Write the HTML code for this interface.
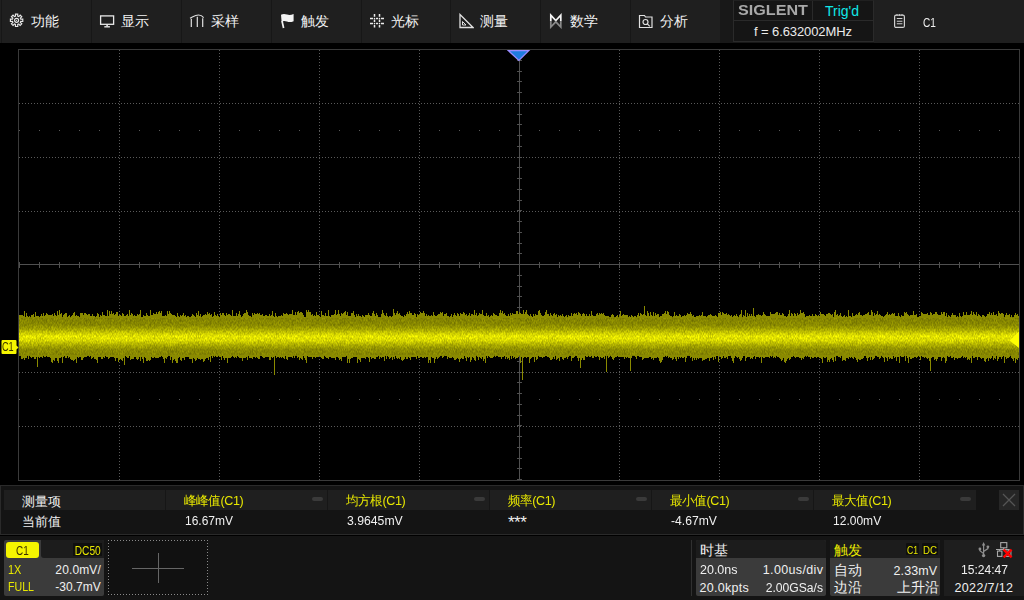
<!DOCTYPE html>
<html><head><meta charset="utf-8"><style>
html,body{margin:0;padding:0;background:#000;width:1024px;height:600px;overflow:hidden}
body{position:relative;font-family:"Liberation Sans", sans-serif}
.t{position:absolute;white-space:nowrap;line-height:1.2}
.r{text-align:right}
</style></head><body>
<div style="position:absolute;left:0;top:0;width:1024px;height:43px;background:#1f1f1f"></div><div style="position:absolute;left:1px;top:0;width:1px;height:43px;background:#171717"></div><div style="position:absolute;left:91px;top:0;width:1px;height:43px;background:#171717"></div><div style="position:absolute;left:181px;top:0;width:1px;height:43px;background:#171717"></div><div style="position:absolute;left:271px;top:0;width:1px;height:43px;background:#171717"></div><div style="position:absolute;left:361px;top:0;width:1px;height:43px;background:#171717"></div><div style="position:absolute;left:450px;top:0;width:1px;height:43px;background:#171717"></div><div style="position:absolute;left:540px;top:0;width:1px;height:43px;background:#171717"></div><div style="position:absolute;left:630px;top:0;width:1px;height:43px;background:#171717"></div><div style="position:absolute;left:8px;top:12px;width:18px;height:18px"><svg width="18" height="18" viewBox="0 0 18 18" fill="none" stroke="#e8e8e8" stroke-width="1.15" stroke-linejoin="miter"><path d="M7.49 4.15 L7.45 2.11 L9.75 2.11 L9.71 4.15 L10.75 4.58 L12.17 3.11 L13.79 4.73 L12.32 6.15 L12.75 7.19 L14.79 7.15 L14.79 9.45 L12.75 9.41 L12.32 10.45 L13.79 11.87 L12.17 13.49 L10.75 12.02 L9.71 12.45 L9.75 14.49 L7.45 14.49 L7.49 12.45 L6.45 12.02 L5.03 13.49 L3.41 11.87 L4.88 10.45 L4.45 9.41 L2.41 9.45 L2.41 7.15 L4.45 7.19 L4.88 6.15 L3.41 4.73 L5.03 3.11 L6.45 4.58Z"/><circle cx="8.6" cy="8.3" r="2.0"/><circle cx="8.6" cy="8.3" r="0.6" fill="#e8e8e8" stroke="none"/></svg></div><div class="t" style="left:30.5px;top:14px;font-size:13.5px;font-weight:500;color:#f2f2f2">功能</div><div style="position:absolute;left:99px;top:13px;width:16px;height:16px"><svg width="16" height="16" viewBox="0 0 16 16" fill="none" stroke="#e8e8e8" stroke-width="1.3"><rect x="1.6" y="2.9" width="13" height="8.4"/><path d="M8.1 11.3v2" stroke-width="1.6"/><path d="M5.3 13.8h5.6" stroke-width="1.4"/></svg></div><div class="t" style="left:120.5px;top:14px;font-size:13.5px;font-weight:500;color:#f2f2f2">显示</div><div style="position:absolute;left:189px;top:13px;width:16px;height:16px"><svg width="16" height="16" viewBox="0 0 16 16" fill="none" stroke="#e0e0e0" stroke-width="1.2"><path d="M1 5.2C3.5 4.2 6 2 9.5 2 12 2 13.5 3.2 14.6 4.6"/><path d="M2.3 5.8V14M8.3 3.8V14M13.7 5.2V14"/></svg></div><div class="t" style="left:210.5px;top:14px;font-size:13.5px;font-weight:500;color:#f2f2f2">采样</div><div style="position:absolute;left:280px;top:13px;width:16px;height:16px"><svg width="16" height="16" viewBox="0 0 16 16"><path d="M2 8L3.6 15" stroke="#f4f4f4" stroke-width="1.7"/><path d="M1 1.8C3 0.6 5 0.8 7 1.6 9 2.4 11 2.2 13.6 1.1L13.6 8.2C11 9.3 9 9.4 7 8.6 5 7.8 3 7.8 1.6 8.8Z" fill="#f4f4f4"/></svg></div><div class="t" style="left:300.5px;top:14px;font-size:13.5px;font-weight:500;color:#f2f2f2">触发</div><div style="position:absolute;left:369px;top:13px;width:16px;height:16px"><svg width="16" height="16" viewBox="0 0 16 16" stroke="#ececec" stroke-width="1.5" fill="none"><path d="M5.5 1v2.8M5.5 6.5v2.6M5.5 12v2.6M10.5 1v2.8M10.5 6.5v2.6M10.5 12v2.6M1 5.5h3M7 5.5h2M12 5.5h3M1 10.6h3M7 10.6h2M12 10.6h3"/><path d="M5.5 5.5h.01M10.5 5.5h.01M5.5 10.6h.01M10.5 10.6h.01" stroke-linecap="round" stroke-width="1.6"/></svg></div><div class="t" style="left:390.5px;top:14px;font-size:13.5px;font-weight:500;color:#f2f2f2">光标</div><div style="position:absolute;left:458px;top:13px;width:16px;height:16px"><svg width="16" height="16" viewBox="0 0 16 16" fill="none" stroke="#e0e0e0" stroke-width="1.3"><path d="M2 1.5v13h13z"/><path d="M4.5 8.5v3.5h3.5z" stroke-width="1"/></svg></div><div class="t" style="left:479.5px;top:14px;font-size:13.5px;font-weight:500;color:#f2f2f2">测量</div><div style="position:absolute;left:549px;top:13px;width:16px;height:16px"><svg width="16" height="16" viewBox="0 0 16 16" fill="none" stroke-width="1.7"><path d="M1.8 8.2V2.2L6.8 7.6 11.8 2.2V8.2" stroke="#f4f4f4"/><path d="M1.8 8.2V14 L6.8 8.8 11.8 14V8.2" stroke="#8a8a8a"/></svg></div><div class="t" style="left:569.5px;top:14px;font-size:13.5px;font-weight:500;color:#f2f2f2">数学</div><div style="position:absolute;left:638px;top:13px;width:16px;height:16px"><svg width="16" height="16" viewBox="0 0 16 16" fill="none" stroke="#e0e0e0" stroke-width="1.2"><path d="M1.5 2.5h5l1 1.5h6.5v10.5h-12.5z"/><circle cx="7.5" cy="9" r="2.5"/><path d="M9.3 10.8l2.5 2.5"/></svg></div><div class="t" style="left:659.5px;top:14px;font-size:13.5px;font-weight:500;color:#f2f2f2">分析</div><div style="position:absolute;left:720px;top:0;width:154px;height:43px;background:#181818"></div><div style="position:absolute;left:733px;top:0;width:139px;height:40px;background:#151515;border:1px solid #2a2a2a;border-top-color:#202020"></div><div style="position:absolute;left:734px;top:20px;width:139px;height:1px;background:#2a2a2a"></div><div style="position:absolute;left:812px;top:1px;width:1px;height:19px;background:#2a2a2a"></div><div class="t" style="left:738px;top:1.4px;font-size:15px;font-weight:bold;color:#a8a8a8;transform:scaleX(1.075);transform-origin:0 0">SIGLENT</div><div class="t" style="left:825px;top:3px;font-size:14px;color:#10e8e8">Trig'd</div><div class="t" style="left:754px;top:24px;font-size:13px;letter-spacing:-0.1px;color:#ececec">f = 6.632002MHz</div><div style="position:absolute;left:893px;top:13px;width:13px;height:16px"><svg width="13" height="16" viewBox="0 0 13 16" fill="none" stroke="#d0d0d0" stroke-width="1.2"><rect x="1.6" y="2.2" width="9.8" height="12.2" rx="1.5"/><path d="M4 1.2v1.5M6.5 1.2v1.5M9 1.2v1.5" stroke-width="1"/><path d="M3.8 5.5h5.6M3.8 8.2h5.6M3.8 10.8h5.6" stroke-width="1.1"/></svg></div><div class="t" style="left:923.40px;top:15.37px;font-size:13px;letter-spacing:0.00px;color:#f0f0f0;transform:scaleX(0.777);transform-origin:0 0;">C1</div>
<svg style="position:absolute;left:0;top:0" width="1024" height="600"><line x1="119.5" y1="50" x2="119.5" y2="480" stroke="#5a5a5a" stroke-width="1" stroke-dasharray="1 2"/><line x1="219.5" y1="50" x2="219.5" y2="480" stroke="#5a5a5a" stroke-width="1" stroke-dasharray="1 2"/><line x1="319.5" y1="50" x2="319.5" y2="480" stroke="#5a5a5a" stroke-width="1" stroke-dasharray="1 2"/><line x1="419.5" y1="50" x2="419.5" y2="480" stroke="#5a5a5a" stroke-width="1" stroke-dasharray="1 2"/><line x1="619.5" y1="50" x2="619.5" y2="480" stroke="#5a5a5a" stroke-width="1" stroke-dasharray="1 2"/><line x1="719.5" y1="50" x2="719.5" y2="480" stroke="#5a5a5a" stroke-width="1" stroke-dasharray="1 2"/><line x1="819.5" y1="50" x2="819.5" y2="480" stroke="#5a5a5a" stroke-width="1" stroke-dasharray="1 2"/><line x1="919.5" y1="50" x2="919.5" y2="480" stroke="#5a5a5a" stroke-width="1" stroke-dasharray="1 2"/><line x1="19" y1="103.5" x2="1019" y2="103.5" stroke="#5a5a5a" stroke-width="1" stroke-dasharray="1 2"/><line x1="19" y1="157.5" x2="1019" y2="157.5" stroke="#5a5a5a" stroke-width="1" stroke-dasharray="1 2"/><line x1="19" y1="211.5" x2="1019" y2="211.5" stroke="#5a5a5a" stroke-width="1" stroke-dasharray="1 2"/><line x1="19" y1="318.5" x2="1019" y2="318.5" stroke="#5a5a5a" stroke-width="1" stroke-dasharray="1 2"/><line x1="19" y1="372.5" x2="1019" y2="372.5" stroke="#5a5a5a" stroke-width="1" stroke-dasharray="1 2"/><line x1="19" y1="426.5" x2="1019" y2="426.5" stroke="#5a5a5a" stroke-width="1" stroke-dasharray="1 2"/><line x1="19" y1="130.5" x2="1019" y2="130.5" stroke="#5a5a5a" stroke-width="1" stroke-dasharray="1 19"/><line x1="19" y1="399.5" x2="1019" y2="399.5" stroke="#5a5a5a" stroke-width="1" stroke-dasharray="1 19"/><line x1="519.5" y1="50" x2="519.5" y2="480" stroke="#505050"/><line x1="19" y1="264.5" x2="1019" y2="264.5" stroke="#505050"/><path d="M19.5 262V268 M39.5 262V268 M59.5 262V268 M79.5 262V268 M99.5 262V268 M119.5 262V268 M139.5 262V268 M159.5 262V268 M179.5 262V268 M199.5 262V268 M219.5 262V268 M239.5 262V268 M259.5 262V268 M279.5 262V268 M299.5 262V268 M319.5 262V268 M339.5 262V268 M359.5 262V268 M379.5 262V268 M399.5 262V268 M419.5 262V268 M439.5 262V268 M459.5 262V268 M479.5 262V268 M499.5 262V268 M519.5 262V268 M539.5 262V268 M559.5 262V268 M579.5 262V268 M599.5 262V268 M619.5 262V268 M639.5 262V268 M659.5 262V268 M679.5 262V268 M699.5 262V268 M719.5 262V268 M739.5 262V268 M759.5 262V268 M779.5 262V268 M799.5 262V268 M819.5 262V268 M839.5 262V268 M859.5 262V268 M879.5 262V268 M899.5 262V268 M919.5 262V268 M939.5 262V268 M959.5 262V268 M979.5 262V268 M999.5 262V268 M1019.5 262V268 M517 49.5H522 M517 60.5H522 M517 71.5H522 M517 81.5H522 M517 92.5H522 M517 103.5H522 M517 114.5H522 M517 124.5H522 M517 135.5H522 M517 146.5H522 M517 157.5H522 M517 167.5H522 M517 178.5H522 M517 189.5H522 M517 200.5H522 M517 210.5H522 M517 221.5H522 M517 232.5H522 M517 243.5H522 M517 253.5H522 M517 264.5H522 M517 275.5H522 M517 286.5H522 M517 296.5H522 M517 307.5H522 M517 318.5H522 M517 329.5H522 M517 339.5H522 M517 350.5H522 M517 361.5H522 M517 372.5H522 M517 382.5H522 M517 393.5H522 M517 404.5H522 M517 415.5H522 M517 425.5H522 M517 436.5H522 M517 447.5H522 M517 458.5H522 M517 468.5H522 M517 479.5H522" stroke="#505050" fill="none"/><rect x="18.5" y="49.5" width="1001" height="431" fill="none" stroke="#3a3a3a"/><defs><linearGradient id="wg" x1="0" y1="0" x2="0" y2="1"><stop offset="0" stop-color="#808000"/><stop offset="0.2" stop-color="#868600"/><stop offset="0.31" stop-color="#a0a000"/><stop offset="0.43" stop-color="#cccc00"/><stop offset="0.5" stop-color="#e0e000"/><stop offset="0.6" stop-color="#d4d400"/><stop offset="0.72" stop-color="#a8a800"/><stop offset="0.84" stop-color="#888800"/><stop offset="1" stop-color="#808000"/></linearGradient><filter id="nz" x="0" y="0" width="100%" height="100%" color-interpolation-filters="sRGB"><feTurbulence type="fractalNoise" baseFrequency="1.5 0.45" numOctaves="1" seed="5" result="t"/><feColorMatrix in="t" type="matrix" values="1 0 0 0 0  1 0 0 0 0  1 0 0 0 0  0 0 0 0 1" result="g"/><feComposite in="SourceGraphic" in2="g" operator="arithmetic" k1="0.6" k2="0.72" k3="0" k4="0"/></filter></defs><rect x="19" y="317" width="1000" height="39" fill="url(#wg)" filter="url(#nz)"/><path d="M19.5 318V315 M20.5 318V315 M21.5 318V315 M21.5 355V359 M22.5 318V315 M22.5 355V359 M23.5 318V316 M23.5 355V358 M24.5 318V311 M24.5 355V360 M25.5 355V358 M26.5 318V313 M26.5 355V358 M27.5 318V316 M28.5 355V359 M29.5 318V316 M30.5 355V357 M31.5 318V315 M31.5 355V358 M32.5 318V315 M32.5 355V357 M33.5 318V314 M33.5 355V357 M34.5 355V359 M35.5 318V312 M35.5 355V359 M36.5 318V316 M36.5 355V357 M37.5 318V316 M37.5 355V358 M38.5 318V316 M38.5 355V357 M39.5 355V358 M40.5 318V316 M40.5 355V357 M41.5 318V314 M41.5 355V357 M42.5 318V316 M42.5 355V358 M43.5 318V313 M44.5 318V316 M44.5 355V357 M45.5 318V315 M45.5 355V357 M46.5 318V313 M47.5 318V314 M47.5 355V357 M48.5 318V315 M48.5 355V357 M49.5 318V315 M49.5 355V357 M50.5 318V315 M50.5 355V358 M51.5 318V315 M51.5 355V362 M52.5 318V314 M52.5 355V363 M53.5 318V316 M53.5 355V360 M54.5 318V313 M54.5 355V361 M55.5 318V315 M55.5 355V358 M56.5 318V316 M56.5 355V358 M57.5 318V311 M57.5 355V361 M58.5 318V315 M58.5 355V363 M59.5 318V310 M59.5 355V358 M60.5 318V314 M60.5 355V358 M61.5 318V313 M61.5 355V357 M62.5 355V363 M63.5 318V315 M63.5 355V357 M64.5 318V314 M65.5 318V313 M65.5 355V358 M66.5 318V313 M66.5 355V358 M68.5 318V316 M68.5 355V358 M69.5 318V315 M69.5 355V357 M70.5 355V359 M71.5 318V316 M71.5 355V360 M72.5 318V315 M72.5 355V360 M73.5 318V313 M73.5 355V361 M74.5 318V312 M74.5 355V360 M75.5 318V316 M75.5 355V359 M76.5 318V315 M76.5 355V363 M77.5 318V316 M77.5 355V357 M78.5 318V316 M78.5 355V358 M79.5 355V357 M80.5 318V313 M80.5 355V357 M81.5 318V313 M81.5 355V360 M82.5 318V313 M82.5 355V360 M83.5 318V315 M83.5 355V358 M84.5 318V313 M84.5 355V357 M85.5 318V313 M85.5 355V357 M86.5 318V314 M86.5 355V357 M87.5 318V315 M88.5 318V314 M89.5 318V314 M89.5 355V357 M90.5 318V316 M91.5 318V316 M91.5 355V359 M92.5 318V314 M92.5 355V358 M93.5 318V316 M93.5 355V357 M94.5 318V316 M94.5 355V359 M95.5 355V359 M96.5 318V316 M96.5 355V360 M97.5 318V313 M97.5 355V363 M98.5 318V314 M98.5 355V357 M99.5 355V357 M100.5 318V315 M100.5 355V357 M101.5 318V316 M101.5 355V359 M102.5 318V312 M102.5 355V359 M103.5 318V315 M103.5 355V357 M104.5 318V315 M104.5 355V358 M105.5 318V316 M106.5 318V316 M106.5 355V357 M107.5 318V310 M107.5 355V357 M108.5 318V316 M108.5 355V359 M109.5 318V311 M109.5 355V358 M110.5 318V314 M110.5 355V357 M111.5 318V311 M111.5 355V357 M112.5 318V314 M112.5 355V357 M113.5 318V313 M113.5 355V357 M114.5 318V315 M114.5 355V358 M115.5 318V314 M115.5 355V361 M116.5 318V312 M116.5 355V358 M117.5 318V312 M117.5 355V358 M118.5 318V316 M118.5 355V362 M119.5 318V315 M119.5 355V360 M120.5 318V315 M120.5 355V359 M121.5 318V316 M121.5 355V360 M122.5 318V313 M122.5 355V361 M123.5 318V314 M123.5 355V358 M124.5 318V316 M124.5 355V362 M125.5 318V316 M126.5 318V315 M126.5 355V357 M127.5 318V314 M127.5 355V358 M128.5 318V316 M128.5 355V358 M129.5 318V310 M130.5 318V315 M130.5 355V360 M131.5 318V313 M131.5 355V359 M132.5 318V314 M132.5 355V359 M133.5 318V316 M133.5 355V359 M134.5 318V315 M134.5 355V357 M135.5 318V316 M135.5 355V357 M136.5 318V316 M136.5 355V359 M137.5 318V314 M137.5 355V360 M138.5 318V315 M138.5 355V359 M139.5 318V314 M139.5 355V357 M140.5 318V310 M140.5 355V361 M141.5 355V357 M142.5 355V359 M143.5 318V315 M143.5 355V363 M144.5 318V316 M144.5 355V357 M145.5 318V316 M145.5 355V358 M146.5 318V313 M146.5 355V361 M147.5 318V315 M147.5 355V361 M148.5 318V316 M148.5 355V360 M149.5 318V316 M149.5 355V361 M150.5 318V310 M150.5 355V360 M151.5 318V315 M151.5 355V357 M152.5 318V315 M152.5 355V358 M153.5 318V313 M153.5 355V358 M154.5 318V314 M154.5 355V357 M155.5 318V314 M155.5 355V358 M156.5 318V312 M156.5 355V358 M157.5 318V314 M157.5 355V358 M158.5 318V312 M158.5 355V358 M159.5 318V311 M159.5 355V357 M160.5 318V313 M160.5 355V357 M161.5 318V311 M162.5 318V316 M162.5 355V357 M163.5 318V316 M163.5 355V359 M164.5 318V316 M164.5 355V363 M165.5 318V315 M165.5 355V358 M166.5 318V316 M166.5 355V359 M167.5 318V311 M167.5 355V357 M168.5 318V314 M169.5 318V311 M170.5 318V313 M170.5 355V360 M171.5 318V314 M171.5 355V357 M172.5 318V315 M172.5 355V363 M173.5 318V315 M173.5 355V360 M174.5 318V315 M174.5 355V359 M175.5 318V316 M175.5 355V361 M176.5 355V363 M177.5 318V313 M177.5 355V363 M178.5 318V316 M178.5 355V358 M179.5 355V357 M180.5 318V315 M180.5 355V360 M181.5 318V316 M181.5 355V361 M182.5 318V315 M182.5 355V358 M183.5 318V313 M183.5 355V358 M184.5 318V316 M184.5 355V360 M185.5 318V315 M185.5 355V357 M186.5 355V357 M187.5 318V316 M187.5 355V357 M188.5 318V316 M188.5 355V357 M189.5 355V359 M190.5 355V359 M191.5 318V316 M191.5 355V359 M192.5 318V314 M192.5 355V363 M193.5 318V315 M193.5 355V358 M194.5 318V316 M194.5 355V359 M195.5 355V361 M196.5 318V313 M196.5 355V360 M197.5 318V315 M197.5 355V358 M198.5 318V311 M198.5 355V359 M199.5 318V316 M199.5 355V359 M200.5 318V314 M200.5 355V360 M201.5 355V359 M202.5 318V316 M202.5 355V359 M203.5 318V315 M203.5 355V362 M204.5 318V315 M204.5 355V361 M205.5 318V314 M205.5 355V359 M206.5 318V315 M206.5 355V358 M207.5 318V312 M207.5 355V358 M208.5 318V314 M208.5 355V360 M209.5 318V313 M209.5 355V357 M210.5 318V315 M210.5 355V362 M211.5 318V314 M212.5 355V358 M213.5 318V316 M214.5 318V312 M214.5 355V357 M215.5 318V315 M216.5 318V316 M216.5 355V357 M217.5 318V314 M217.5 355V357 M218.5 318V316 M219.5 355V357 M220.5 318V313 M220.5 355V357 M221.5 318V315 M221.5 355V360 M222.5 318V313 M223.5 318V313 M223.5 355V358 M224.5 318V315 M224.5 355V360 M225.5 318V316 M225.5 355V358 M226.5 318V313 M226.5 355V358 M227.5 318V315 M227.5 355V363 M228.5 318V314 M228.5 355V358 M229.5 318V314 M229.5 355V358 M230.5 318V315 M230.5 355V358 M231.5 318V316 M231.5 355V357 M232.5 318V310 M233.5 318V316 M233.5 355V357 M234.5 318V316 M234.5 355V358 M235.5 318V316 M235.5 355V357 M236.5 318V313 M236.5 355V358 M237.5 318V316 M238.5 318V314 M238.5 355V357 M239.5 318V311 M239.5 355V358 M240.5 318V315 M240.5 355V358 M241.5 355V358 M242.5 318V316 M242.5 355V361 M243.5 318V314 M243.5 355V358 M244.5 318V313 M244.5 355V358 M245.5 318V313 M245.5 355V358 M246.5 318V310 M246.5 355V357 M247.5 318V312 M247.5 355V360 M248.5 318V315 M249.5 318V316 M249.5 355V358 M250.5 318V316 M250.5 355V358 M251.5 355V358 M252.5 318V313 M252.5 355V359 M253.5 318V315 M253.5 355V357 M254.5 318V313 M254.5 355V357 M255.5 318V314 M255.5 355V358 M256.5 318V314 M256.5 355V357 M257.5 318V313 M257.5 355V358 M258.5 318V314 M258.5 355V359 M259.5 318V313 M259.5 355V359 M260.5 318V315 M261.5 318V315 M262.5 318V314 M262.5 355V357 M263.5 318V316 M263.5 355V358 M264.5 318V316 M264.5 355V358 M265.5 318V315 M265.5 355V357 M266.5 318V315 M266.5 355V357 M267.5 318V316 M267.5 355V357 M268.5 318V316 M268.5 355V357 M269.5 318V314 M269.5 355V360 M270.5 318V316 M270.5 355V360 M271.5 318V315 M271.5 355V357 M272.5 318V311 M272.5 355V358 M273.5 318V316 M273.5 355V357 M274.5 355V357 M275.5 318V313 M276.5 318V316 M276.5 355V358 M277.5 355V357 M278.5 318V316 M278.5 355V357 M279.5 318V316 M279.5 355V358 M280.5 318V316 M280.5 355V357 M281.5 318V315 M281.5 355V358 M282.5 318V316 M282.5 355V357 M283.5 318V313 M283.5 355V358 M284.5 318V314 M284.5 355V359 M285.5 318V314 M286.5 318V313 M286.5 355V359 M287.5 318V314 M287.5 355V360 M288.5 318V315 M288.5 355V357 M289.5 318V314 M289.5 355V357 M290.5 318V314 M290.5 355V357 M291.5 318V314 M291.5 355V357 M292.5 318V310 M292.5 355V358 M293.5 318V315 M294.5 318V315 M294.5 355V358 M295.5 318V312 M296.5 318V315 M297.5 318V312 M297.5 355V358 M298.5 318V311 M298.5 355V357 M299.5 318V313 M299.5 355V360 M300.5 318V312 M300.5 355V358 M301.5 318V312 M301.5 355V359 M302.5 318V313 M302.5 355V360 M303.5 318V315 M304.5 355V358 M305.5 355V360 M306.5 318V310 M306.5 355V363 M307.5 318V312 M308.5 318V310 M308.5 355V357 M309.5 318V312 M309.5 355V357 M310.5 318V312 M310.5 355V357 M311.5 318V315 M311.5 355V357 M312.5 318V314 M312.5 355V359 M313.5 318V316 M313.5 355V357 M314.5 318V315 M314.5 355V357 M315.5 318V316 M315.5 355V358 M316.5 318V312 M316.5 355V357 M317.5 318V315 M317.5 355V357 M318.5 318V315 M318.5 355V357 M319.5 318V316 M320.5 355V357 M321.5 318V311 M321.5 355V358 M322.5 318V315 M322.5 355V359 M323.5 318V315 M323.5 355V359 M324.5 318V316 M325.5 318V313 M325.5 355V357 M326.5 318V316 M326.5 355V358 M327.5 318V316 M327.5 355V358 M328.5 318V310 M328.5 355V359 M329.5 318V316 M329.5 355V357 M330.5 355V357 M331.5 318V315 M331.5 355V358 M332.5 318V315 M332.5 355V358 M333.5 318V315 M333.5 355V358 M334.5 318V314 M334.5 355V358 M335.5 318V310 M335.5 355V360 M336.5 318V315 M336.5 355V357 M337.5 318V314 M337.5 355V357 M338.5 318V310 M338.5 355V358 M339.5 318V314 M339.5 355V360 M340.5 318V316 M340.5 355V359 M341.5 318V313 M341.5 355V361 M342.5 318V314 M342.5 355V357 M343.5 318V313 M343.5 355V357 M344.5 318V312 M344.5 355V357 M345.5 318V311 M345.5 355V357 M346.5 318V315 M347.5 318V312 M347.5 355V363 M348.5 318V316 M348.5 355V359 M349.5 318V316 M349.5 355V363 M350.5 318V316 M350.5 355V359 M351.5 318V313 M351.5 355V358 M352.5 318V313 M352.5 355V358 M353.5 318V311 M353.5 355V357 M354.5 318V315 M354.5 355V357 M355.5 355V357 M356.5 318V314 M356.5 355V357 M357.5 318V316 M357.5 355V363 M358.5 318V314 M358.5 355V359 M359.5 318V316 M359.5 355V360 M360.5 318V316 M360.5 355V362 M361.5 355V358 M362.5 318V315 M362.5 355V358 M363.5 318V316 M363.5 355V358 M364.5 355V358 M365.5 318V315 M365.5 355V359 M366.5 318V315 M366.5 355V357 M367.5 318V315 M367.5 355V357 M368.5 318V313 M368.5 355V358 M369.5 318V315 M369.5 355V362 M370.5 318V316 M370.5 355V357 M371.5 318V316 M371.5 355V359 M372.5 318V313 M372.5 355V358 M373.5 318V311 M373.5 355V358 M374.5 318V314 M374.5 355V359 M375.5 318V316 M375.5 355V359 M376.5 318V313 M376.5 355V357 M377.5 318V315 M377.5 355V357 M379.5 355V359 M380.5 355V357 M381.5 318V314 M381.5 355V358 M382.5 318V310 M382.5 355V357 M383.5 318V313 M383.5 355V357 M384.5 318V315 M384.5 355V361 M385.5 318V316 M386.5 318V313 M386.5 355V359 M387.5 318V316 M388.5 355V357 M389.5 318V316 M389.5 355V359 M390.5 318V316 M390.5 355V358 M391.5 355V357 M392.5 318V316 M392.5 355V360 M393.5 318V313 M393.5 355V357 M394.5 318V313 M394.5 355V359 M395.5 318V315 M396.5 318V313 M396.5 355V358 M397.5 318V311 M397.5 355V359 M398.5 318V314 M398.5 355V358 M399.5 318V313 M399.5 355V359 M400.5 318V315 M400.5 355V357 M401.5 318V316 M401.5 355V360 M402.5 318V316 M402.5 355V361 M403.5 355V360 M404.5 318V315 M404.5 355V359 M405.5 318V316 M405.5 355V357 M406.5 318V314 M406.5 355V359 M407.5 318V312 M407.5 355V359 M408.5 318V314 M408.5 355V357 M409.5 318V311 M409.5 355V358 M410.5 318V313 M410.5 355V360 M411.5 318V313 M411.5 355V357 M412.5 318V315 M412.5 355V357 M413.5 318V315 M413.5 355V357 M414.5 318V313 M414.5 355V357 M415.5 318V314 M415.5 355V357 M416.5 355V359 M417.5 318V314 M418.5 318V315 M418.5 355V358 M419.5 318V314 M419.5 355V358 M420.5 318V312 M420.5 355V357 M421.5 318V313 M421.5 355V357 M422.5 318V313 M422.5 355V358 M423.5 318V311 M423.5 355V358 M424.5 318V313 M424.5 355V357 M425.5 318V316 M425.5 355V358 M426.5 318V314 M426.5 355V357 M427.5 318V316 M427.5 355V357 M428.5 318V315 M428.5 355V363 M429.5 318V316 M429.5 355V360 M430.5 318V316 M430.5 355V363 M431.5 318V315 M431.5 355V357 M432.5 318V316 M432.5 355V358 M433.5 318V312 M433.5 355V358 M434.5 318V315 M434.5 355V363 M435.5 318V316 M435.5 355V359 M436.5 318V316 M436.5 355V357 M437.5 318V315 M437.5 355V359 M438.5 318V314 M438.5 355V358 M439.5 318V314 M439.5 355V357 M440.5 318V312 M441.5 318V313 M442.5 318V312 M442.5 355V358 M443.5 318V316 M443.5 355V357 M444.5 318V314 M445.5 318V314 M446.5 318V313 M447.5 318V316 M447.5 355V359 M448.5 318V316 M448.5 355V357 M449.5 355V358 M450.5 318V316 M450.5 355V358 M451.5 318V314 M451.5 355V358 M452.5 355V357 M453.5 318V315 M453.5 355V358 M454.5 318V313 M454.5 355V360 M455.5 318V315 M455.5 355V360 M456.5 318V316 M456.5 355V359 M457.5 318V313 M457.5 355V358 M458.5 318V314 M458.5 355V359 M459.5 318V316 M459.5 355V362 M460.5 318V313 M460.5 355V359 M461.5 318V314 M461.5 355V358 M462.5 318V314 M462.5 355V359 M463.5 318V312 M463.5 355V359 M464.5 318V313 M465.5 318V315 M465.5 355V358 M466.5 318V314 M466.5 355V361 M467.5 318V316 M467.5 355V357 M468.5 318V315 M468.5 355V358 M469.5 318V313 M469.5 355V357 M470.5 318V316 M470.5 355V362 M471.5 318V314 M471.5 355V360 M472.5 318V314 M472.5 355V357 M473.5 318V315 M473.5 355V358 M474.5 318V310 M474.5 355V360 M475.5 318V315 M475.5 355V361 M476.5 318V313 M477.5 318V316 M477.5 355V357 M478.5 318V315 M478.5 355V360 M479.5 318V313 M479.5 355V357 M480.5 318V314 M480.5 355V358 M481.5 318V314 M481.5 355V359 M482.5 318V310 M482.5 355V357 M483.5 318V315 M483.5 355V361 M484.5 318V316 M484.5 355V359 M485.5 318V316 M485.5 355V363 M486.5 318V313 M487.5 318V316 M487.5 355V358 M488.5 318V315 M489.5 355V357 M490.5 318V316 M490.5 355V358 M491.5 318V315 M491.5 355V358 M492.5 318V316 M492.5 355V358 M493.5 318V313 M493.5 355V357 M494.5 318V314 M495.5 318V315 M495.5 355V357 M496.5 318V315 M497.5 318V316 M498.5 318V316 M498.5 355V357 M499.5 318V313 M499.5 355V357 M500.5 318V310 M500.5 355V357 M501.5 318V313 M501.5 355V359 M502.5 318V311 M502.5 355V357 M503.5 318V314 M503.5 355V357 M504.5 318V313 M505.5 318V315 M505.5 355V359 M506.5 318V316 M506.5 355V357 M507.5 318V316 M507.5 355V359 M508.5 318V314 M508.5 355V358 M509.5 318V316 M509.5 355V360 M510.5 318V313 M511.5 318V315 M511.5 355V359 M512.5 318V313 M513.5 318V314 M513.5 355V358 M514.5 318V314 M514.5 355V357 M515.5 318V314 M515.5 355V359 M516.5 318V311 M516.5 355V358 M517.5 318V311 M517.5 355V358 M518.5 318V314 M518.5 355V357 M519.5 318V312 M520.5 318V313 M520.5 355V363 M521.5 318V314 M521.5 355V357 M522.5 318V314 M522.5 355V357 M523.5 318V310 M523.5 355V358 M524.5 318V314 M524.5 355V357 M525.5 318V312 M525.5 355V357 M526.5 318V310 M526.5 355V358 M527.5 318V314 M527.5 355V357 M528.5 318V315 M528.5 355V357 M529.5 318V316 M529.5 355V363 M530.5 318V314 M530.5 355V359 M531.5 318V316 M531.5 355V358 M532.5 355V357 M533.5 318V314 M533.5 355V357 M534.5 318V316 M534.5 355V362 M535.5 318V314 M535.5 355V357 M536.5 318V315 M536.5 355V360 M537.5 318V315 M537.5 355V359 M538.5 318V311 M539.5 318V310 M539.5 355V357 M540.5 318V313 M540.5 355V357 M541.5 318V315 M541.5 355V357 M542.5 318V316 M542.5 355V358 M543.5 318V316 M543.5 355V357 M544.5 318V315 M544.5 355V357 M545.5 318V312 M546.5 318V310 M547.5 318V314 M547.5 355V357 M548.5 318V314 M548.5 355V357 M549.5 318V316 M549.5 355V358 M550.5 318V313 M550.5 355V360 M551.5 318V315 M551.5 355V360 M552.5 318V316 M552.5 355V359 M553.5 318V314 M553.5 355V357 M554.5 318V313 M554.5 355V359 M555.5 318V315 M556.5 318V314 M556.5 355V360 M557.5 355V359 M558.5 318V315 M558.5 355V358 M559.5 318V316 M559.5 355V361 M560.5 318V315 M560.5 355V357 M561.5 318V316 M561.5 355V357 M562.5 318V314 M562.5 355V359 M563.5 318V316 M563.5 355V360 M564.5 355V358 M565.5 318V316 M565.5 355V358 M566.5 318V315 M566.5 355V357 M567.5 355V359 M568.5 318V315 M568.5 355V357 M569.5 318V316 M570.5 318V316 M571.5 318V313 M571.5 355V361 M572.5 318V316 M572.5 355V358 M573.5 318V314 M573.5 355V358 M574.5 318V313 M574.5 355V357 M575.5 318V314 M576.5 318V313 M577.5 318V315 M577.5 355V358 M578.5 318V312 M578.5 355V361 M579.5 318V313 M579.5 355V358 M580.5 318V314 M580.5 355V359 M581.5 318V316 M581.5 355V360 M582.5 318V314 M582.5 355V358 M583.5 318V313 M583.5 355V360 M584.5 318V314 M584.5 355V360 M585.5 318V316 M586.5 318V314 M586.5 355V357 M587.5 318V316 M587.5 355V357 M588.5 318V316 M589.5 318V314 M589.5 355V357 M590.5 318V316 M590.5 355V357 M591.5 318V311 M592.5 318V315 M592.5 355V358 M593.5 318V316 M593.5 355V358 M594.5 318V316 M595.5 318V316 M595.5 355V357 M596.5 318V314 M596.5 355V357 M597.5 318V313 M598.5 318V315 M598.5 355V357 M599.5 318V313 M599.5 355V360 M600.5 318V314 M600.5 355V357 M601.5 318V313 M601.5 355V358 M602.5 318V314 M602.5 355V358 M603.5 318V313 M603.5 355V357 M604.5 318V315 M604.5 355V359 M605.5 318V316 M606.5 318V316 M607.5 318V316 M608.5 318V316 M608.5 355V358 M609.5 355V357 M611.5 318V315 M611.5 355V357 M612.5 318V314 M612.5 355V359 M613.5 318V315 M613.5 355V360 M614.5 355V358 M615.5 355V357 M616.5 318V316 M616.5 355V357 M617.5 318V315 M618.5 355V357 M619.5 318V315 M619.5 355V357 M620.5 318V311 M620.5 355V357 M621.5 318V316 M621.5 355V357 M622.5 318V315 M622.5 355V357 M623.5 318V314 M623.5 355V357 M624.5 318V315 M624.5 355V359 M625.5 318V315 M625.5 355V357 M626.5 318V315 M626.5 355V358 M627.5 318V315 M627.5 355V357 M628.5 355V358 M629.5 318V316 M629.5 355V358 M630.5 355V359 M631.5 318V315 M631.5 355V358 M632.5 318V316 M634.5 318V316 M635.5 318V316 M635.5 355V357 M636.5 355V359 M637.5 318V315 M638.5 318V313 M639.5 318V316 M639.5 355V357 M640.5 318V313 M640.5 355V357 M641.5 318V314 M641.5 355V357 M642.5 318V315 M642.5 355V360 M643.5 318V314 M643.5 355V359 M644.5 318V313 M644.5 355V358 M645.5 318V315 M645.5 355V358 M646.5 318V316 M646.5 355V358 M647.5 318V311 M647.5 355V358 M648.5 318V313 M648.5 355V358 M649.5 318V316 M649.5 355V357 M650.5 318V312 M650.5 355V357 M651.5 318V315 M651.5 355V359 M652.5 318V316 M652.5 355V358 M653.5 318V312 M653.5 355V360 M654.5 318V316 M654.5 355V358 M655.5 318V313 M655.5 355V358 M656.5 318V315 M656.5 355V358 M657.5 318V314 M657.5 355V357 M658.5 318V314 M658.5 355V358 M659.5 355V361 M660.5 318V316 M660.5 355V363 M661.5 318V316 M661.5 355V362 M662.5 318V314 M662.5 355V360 M663.5 318V314 M663.5 355V357 M664.5 318V313 M664.5 355V357 M665.5 318V311 M666.5 318V314 M666.5 355V357 M667.5 318V311 M668.5 318V312 M668.5 355V358 M669.5 318V315 M669.5 355V357 M670.5 318V316 M670.5 355V358 M671.5 318V316 M671.5 355V358 M672.5 355V360 M673.5 318V316 M673.5 355V359 M674.5 318V312 M674.5 355V357 M675.5 318V316 M675.5 355V359 M676.5 318V315 M676.5 355V361 M677.5 318V316 M677.5 355V357 M678.5 318V316 M678.5 355V359 M679.5 318V314 M679.5 355V357 M680.5 318V315 M680.5 355V358 M681.5 355V357 M682.5 318V316 M682.5 355V358 M683.5 318V316 M683.5 355V358 M684.5 318V315 M684.5 355V357 M685.5 318V316 M685.5 355V362 M686.5 318V315 M686.5 355V358 M687.5 318V313 M688.5 318V314 M689.5 318V314 M690.5 318V312 M690.5 355V358 M691.5 318V314 M691.5 355V357 M692.5 318V316 M692.5 355V361 M693.5 318V315 M693.5 355V358 M694.5 355V360 M695.5 355V358 M696.5 318V316 M696.5 355V360 M697.5 318V316 M697.5 355V358 M698.5 318V316 M698.5 355V359 M699.5 318V315 M699.5 355V358 M700.5 318V316 M700.5 355V358 M701.5 318V315 M701.5 355V358 M702.5 318V312 M702.5 355V361 M703.5 318V316 M703.5 355V360 M704.5 318V316 M704.5 355V360 M705.5 318V316 M705.5 355V359 M706.5 355V359 M707.5 318V316 M707.5 355V358 M708.5 318V315 M708.5 355V358 M709.5 318V315 M709.5 355V361 M710.5 318V314 M710.5 355V358 M711.5 318V315 M711.5 355V358 M712.5 318V316 M712.5 355V357 M713.5 318V316 M713.5 355V360 M714.5 318V316 M714.5 355V357 M715.5 318V315 M715.5 355V359 M716.5 318V316 M718.5 318V313 M718.5 355V362 M719.5 318V313 M720.5 318V312 M720.5 355V357 M721.5 318V315 M721.5 355V359 M722.5 318V312 M722.5 355V358 M723.5 318V313 M724.5 318V314 M724.5 355V358 M725.5 318V314 M725.5 355V358 M726.5 318V313 M726.5 355V357 M727.5 318V315 M727.5 355V359 M728.5 318V314 M729.5 318V315 M730.5 318V316 M731.5 318V315 M731.5 355V358 M732.5 355V361 M733.5 318V316 M733.5 355V363 M734.5 318V315 M734.5 355V358 M735.5 318V316 M736.5 318V314 M736.5 355V357 M737.5 318V316 M737.5 355V358 M738.5 355V357 M739.5 318V315 M739.5 355V359 M740.5 318V314 M740.5 355V361 M741.5 318V310 M741.5 355V360 M742.5 355V358 M743.5 318V315 M744.5 318V316 M745.5 318V310 M745.5 355V361 M746.5 355V358 M747.5 318V313 M747.5 355V357 M748.5 318V316 M748.5 355V357 M749.5 318V314 M749.5 355V357 M750.5 318V316 M750.5 355V359 M751.5 318V314 M751.5 355V358 M752.5 318V316 M752.5 355V359 M753.5 318V316 M753.5 355V357 M754.5 318V316 M755.5 355V359 M756.5 318V315 M756.5 355V357 M757.5 318V315 M757.5 355V357 M758.5 318V314 M758.5 355V357 M759.5 318V315 M759.5 355V358 M760.5 318V315 M760.5 355V357 M761.5 318V316 M761.5 355V363 M762.5 318V315 M762.5 355V357 M763.5 318V312 M763.5 355V358 M764.5 318V314 M764.5 355V358 M765.5 318V315 M765.5 355V357 M766.5 318V316 M766.5 355V357 M767.5 318V316 M767.5 355V357 M768.5 318V316 M768.5 355V357 M769.5 318V316 M769.5 355V358 M770.5 318V312 M771.5 318V314 M771.5 355V357 M772.5 318V314 M773.5 318V314 M773.5 355V358 M774.5 318V314 M774.5 355V357 M775.5 318V313 M775.5 355V358 M776.5 318V312 M777.5 318V312 M777.5 355V357 M778.5 318V315 M778.5 355V357 M779.5 318V313 M779.5 355V358 M780.5 318V315 M780.5 355V359 M781.5 318V315 M781.5 355V361 M782.5 318V313 M782.5 355V360 M783.5 318V314 M783.5 355V358 M784.5 318V316 M784.5 355V362 M785.5 318V316 M785.5 355V363 M786.5 355V361 M787.5 318V316 M787.5 355V359 M788.5 318V314 M788.5 355V358 M789.5 318V310 M789.5 355V360 M790.5 318V316 M790.5 355V359 M791.5 318V313 M791.5 355V357 M792.5 318V314 M792.5 355V357 M793.5 318V316 M794.5 318V313 M794.5 355V357 M795.5 318V314 M795.5 355V358 M796.5 318V316 M796.5 355V357 M797.5 318V313 M797.5 355V357 M798.5 318V315 M798.5 355V357 M799.5 318V314 M799.5 355V358 M800.5 318V310 M800.5 355V358 M801.5 318V313 M801.5 355V360 M802.5 318V313 M802.5 355V358 M803.5 318V312 M803.5 355V359 M804.5 318V314 M804.5 355V357 M806.5 318V316 M806.5 355V357 M807.5 318V316 M808.5 318V316 M808.5 355V357 M809.5 318V315 M809.5 355V357 M810.5 318V316 M810.5 355V359 M811.5 318V316 M811.5 355V357 M812.5 318V314 M812.5 355V358 M813.5 318V316 M813.5 355V358 M814.5 318V316 M814.5 355V357 M815.5 318V314 M815.5 355V357 M816.5 318V315 M816.5 355V358 M817.5 318V316 M817.5 355V357 M818.5 318V315 M818.5 355V357 M819.5 318V316 M819.5 355V358 M820.5 318V312 M820.5 355V358 M821.5 318V314 M821.5 355V359 M822.5 318V314 M822.5 355V363 M823.5 318V314 M823.5 355V357 M824.5 318V315 M824.5 355V358 M825.5 318V316 M825.5 355V358 M826.5 318V314 M826.5 355V357 M827.5 318V314 M827.5 355V362 M828.5 318V313 M828.5 355V360 M829.5 318V313 M829.5 355V362 M830.5 318V314 M830.5 355V359 M831.5 318V315 M831.5 355V358 M832.5 318V314 M832.5 355V360 M833.5 355V362 M834.5 318V312 M834.5 355V357 M835.5 318V310 M835.5 355V361 M836.5 318V315 M837.5 318V314 M838.5 318V316 M838.5 355V357 M839.5 318V315 M839.5 355V357 M840.5 318V313 M840.5 355V358 M841.5 318V316 M842.5 355V361 M843.5 318V316 M843.5 355V360 M844.5 318V315 M844.5 355V360 M845.5 355V361 M846.5 318V316 M846.5 355V358 M847.5 355V358 M848.5 318V310 M848.5 355V359 M849.5 318V316 M849.5 355V357 M850.5 318V316 M850.5 355V358 M851.5 355V357 M852.5 318V313 M852.5 355V358 M853.5 318V316 M853.5 355V359 M854.5 318V316 M854.5 355V357 M855.5 318V315 M855.5 355V358 M856.5 318V314 M856.5 355V360 M857.5 318V315 M857.5 355V362 M858.5 318V313 M858.5 355V359 M859.5 318V312 M859.5 355V360 M860.5 318V315 M860.5 355V360 M861.5 318V315 M861.5 355V359 M862.5 318V316 M862.5 355V359 M863.5 318V315 M863.5 355V358 M864.5 318V315 M865.5 318V314 M866.5 318V314 M866.5 355V358 M867.5 318V313 M867.5 355V361 M868.5 318V312 M868.5 355V358 M869.5 318V315 M869.5 355V357 M870.5 318V315 M870.5 355V360 M871.5 318V310 M871.5 355V357 M872.5 318V312 M872.5 355V360 M873.5 318V316 M873.5 355V359 M874.5 318V313 M874.5 355V358 M875.5 318V315 M876.5 318V314 M877.5 318V311 M877.5 355V357 M878.5 318V315 M878.5 355V357 M879.5 318V314 M879.5 355V359 M880.5 318V315 M880.5 355V358 M881.5 318V316 M882.5 318V316 M882.5 355V357 M883.5 355V358 M884.5 318V316 M884.5 355V362 M885.5 318V315 M885.5 355V357 M886.5 318V314 M886.5 355V358 M887.5 318V312 M887.5 355V361 M888.5 318V315 M888.5 355V357 M889.5 318V314 M889.5 355V359 M890.5 318V315 M890.5 355V358 M891.5 318V314 M891.5 355V359 M892.5 318V313 M892.5 355V359 M893.5 318V314 M894.5 318V313 M894.5 355V358 M895.5 318V316 M895.5 355V357 M896.5 318V316 M896.5 355V361 M897.5 318V316 M897.5 355V357 M898.5 318V313 M898.5 355V357 M899.5 318V316 M899.5 355V363 M901.5 318V315 M901.5 355V357 M902.5 318V316 M902.5 355V357 M903.5 318V316 M903.5 355V357 M904.5 318V312 M905.5 318V313 M905.5 355V361 M906.5 318V312 M907.5 318V314 M907.5 355V358 M908.5 318V315 M908.5 355V363 M909.5 318V316 M909.5 355V357 M910.5 318V315 M910.5 355V359 M911.5 318V315 M911.5 355V359 M912.5 318V315 M912.5 355V358 M913.5 318V311 M913.5 355V358 M914.5 318V315 M914.5 355V357 M915.5 318V315 M915.5 355V357 M916.5 318V314 M916.5 355V358 M917.5 355V357 M919.5 318V316 M919.5 355V357 M920.5 318V316 M920.5 355V360 M921.5 318V312 M922.5 318V313 M922.5 355V357 M923.5 318V314 M923.5 355V357 M924.5 318V314 M924.5 355V358 M925.5 318V314 M925.5 355V357 M926.5 318V314 M926.5 355V358 M927.5 318V313 M927.5 355V359 M928.5 318V315 M928.5 355V358 M929.5 318V315 M929.5 355V361 M930.5 318V312 M930.5 355V359 M931.5 318V313 M931.5 355V358 M932.5 318V315 M932.5 355V357 M933.5 318V314 M933.5 355V357 M934.5 318V314 M934.5 355V360 M935.5 318V312 M935.5 355V359 M936.5 318V312 M936.5 355V361 M937.5 318V314 M937.5 355V359 M938.5 318V315 M938.5 355V357 M939.5 318V315 M939.5 355V357 M940.5 318V315 M940.5 355V357 M941.5 318V312 M941.5 355V361 M942.5 318V314 M942.5 355V358 M943.5 318V312 M943.5 355V357 M944.5 318V312 M944.5 355V358 M945.5 318V316 M945.5 355V363 M946.5 318V313 M946.5 355V361 M948.5 318V315 M948.5 355V357 M949.5 318V316 M949.5 355V357 M951.5 318V315 M951.5 355V358 M952.5 318V313 M952.5 355V358 M953.5 318V315 M953.5 355V357 M954.5 318V315 M954.5 355V360 M955.5 318V315 M955.5 355V358 M956.5 355V358 M957.5 318V316 M957.5 355V359 M958.5 355V358 M959.5 318V313 M959.5 355V358 M960.5 318V316 M960.5 355V358 M961.5 355V357 M962.5 318V316 M963.5 318V312 M963.5 355V358 M964.5 318V315 M964.5 355V357 M965.5 318V315 M965.5 355V358 M966.5 318V312 M966.5 355V357 M967.5 318V315 M967.5 355V360 M968.5 318V315 M968.5 355V359 M969.5 318V315 M969.5 355V360 M970.5 318V314 M970.5 355V358 M971.5 318V311 M971.5 355V363 M972.5 318V315 M973.5 318V312 M973.5 355V358 M974.5 318V314 M974.5 355V358 M975.5 318V315 M975.5 355V357 M976.5 318V312 M976.5 355V357 M977.5 318V316 M977.5 355V360 M978.5 318V314 M978.5 355V357 M979.5 318V315 M979.5 355V357 M980.5 318V316 M980.5 355V358 M981.5 355V359 M982.5 318V315 M982.5 355V358 M983.5 318V315 M983.5 355V358 M984.5 318V316 M984.5 355V361 M985.5 355V362 M986.5 318V316 M986.5 355V359 M987.5 318V314 M987.5 355V358 M988.5 318V314 M988.5 355V361 M989.5 318V312 M989.5 355V358 M990.5 318V315 M990.5 355V359 M991.5 318V313 M991.5 355V358 M992.5 318V315 M993.5 318V312 M993.5 355V360 M994.5 318V315 M994.5 355V358 M995.5 318V315 M995.5 355V359 M996.5 318V314 M997.5 318V316 M997.5 355V361 M998.5 318V311 M998.5 355V359 M999.5 318V313 M999.5 355V357 M1000.5 318V314 M1000.5 355V357 M1001.5 318V313 M1001.5 355V359 M1002.5 318V313 M1002.5 355V357 M1003.5 318V314 M1004.5 355V363 M1005.5 318V315 M1005.5 355V357 M1006.5 318V313 M1006.5 355V359 M1007.5 318V315 M1007.5 355V358 M1008.5 318V315 M1008.5 355V358 M1009.5 318V314 M1009.5 355V357 M1011.5 318V315 M1011.5 355V358 M1012.5 355V359 M1013.5 355V361 M1014.5 318V315 M1014.5 355V358 M1015.5 318V313 M1015.5 355V363 M1016.5 318V315 M1016.5 355V359 M1017.5 318V314 M1017.5 355V360 M1018.5 318V316 M1018.5 355V358 M274.5 355V375 M522.5 355V380 M580.5 355V368 M606.5 355V372 M630.5 355V371 M930.5 355V371 M37.5 355V367 M124.5 355V365 M393.5 318V309 M644.5 318V306 M753.5 318V308" stroke="#8a8a00" stroke-width="1" fill="none"/></svg>
<svg style="position:absolute;left:507px;top:49px" width="24" height="14"><path d="M1.3 1.6H21.7L11.9 11.4Z" fill="#1e7ce0" stroke="#9a8cff" stroke-width="1.3"/></svg><svg style="position:absolute;left:0px;top:339px" width="20" height="16"><path d="M2.5 1H15.5Q16.5 1 16.5 2V6.5L18.5 8.5L16.5 10.5V14Q16.5 15 15.5 15H2.5Q1.5 15 1.5 14V2Q1.5 1 2.5 1Z" fill="#f5f500"/></svg><div class="t" style="left:2.30px;top:340.09px;font-size:12px;letter-spacing:0.00px;color:#3a3200;transform:scaleX(0.762);transform-origin:0 0;">C1</div><svg style="position:absolute;left:1008px;top:331px" width="12" height="18"><path d="M1.5 9.5L11 0.5V17Z" fill="#ffff00"/></svg>
<div style="position:absolute;left:0;top:485px;width:1022px;height:48px;background:#141414;border:1px solid #2a2a2a"></div><div style="position:absolute;left:4px;top:490px;width:972px;height:20px;background:#1f1f1f"></div><div style="position:absolute;left:165px;top:490px;width:1px;height:20px;background:#161616"></div><div style="position:absolute;left:327px;top:490px;width:1px;height:20px;background:#161616"></div><div style="position:absolute;left:489px;top:490px;width:1px;height:20px;background:#161616"></div><div style="position:absolute;left:651px;top:490px;width:1px;height:20px;background:#161616"></div><div style="position:absolute;left:813px;top:490px;width:1px;height:20px;background:#161616"></div><div class="t" style="left:22px;top:494px;font-size:13px;color:#f0f0f0">测量项</div><div class="t" style="left:22px;top:514px;font-size:13px;color:#f0f0f0">当前值</div><div class="t" style="left:184px;top:493px;font-size:13px;letter-spacing:-0.4px;color:#e8e800;transform:scaleX(0.965);transform-origin:0 0">峰峰值(C1)</div><div class="t" style="left:184.50px;top:512.67px;font-size:13px;letter-spacing:0.00px;color:#f0f0f0;transform:scaleX(0.922);transform-origin:0 0;">16.67mV</div><div style="position:absolute;left:312px;top:497px;width:11px;height:4px;border-radius:2px;background:#3a3a3a"></div><div class="t" style="left:346px;top:493px;font-size:13px;letter-spacing:-0.4px;color:#e8e800;transform:scaleX(0.965);transform-origin:0 0">均方根(C1)</div><div class="t" style="left:346.50px;top:512.67px;font-size:13px;letter-spacing:0.00px;color:#f0f0f0;transform:scaleX(0.940);transform-origin:0 0;">3.9645mV</div><div style="position:absolute;left:474px;top:497px;width:11px;height:4px;border-radius:2px;background:#3a3a3a"></div><div class="t" style="left:508px;top:493px;font-size:13px;letter-spacing:-0.4px;color:#e8e800;transform:scaleX(0.965);transform-origin:0 0">频率(C1)</div><div class="t" style="left:508px;top:513px;font-size:17px;letter-spacing:-0.5px;color:#f0f0f0">***</div><div style="position:absolute;left:636px;top:497px;width:11px;height:4px;border-radius:2px;background:#3a3a3a"></div><div class="t" style="left:670px;top:493px;font-size:13px;letter-spacing:-0.4px;color:#e8e800;transform:scaleX(0.965);transform-origin:0 0">最小值(C1)</div><div class="t" style="left:670.50px;top:512.67px;font-size:13px;letter-spacing:0.00px;color:#f0f0f0;transform:scaleX(0.934);transform-origin:0 0;">-4.67mV</div><div style="position:absolute;left:798px;top:497px;width:11px;height:4px;border-radius:2px;background:#3a3a3a"></div><div class="t" style="left:832px;top:493px;font-size:13px;letter-spacing:-0.4px;color:#e8e800;transform:scaleX(0.965);transform-origin:0 0">最大值(C1)</div><div class="t" style="left:832.50px;top:512.67px;font-size:13px;letter-spacing:0.00px;color:#f0f0f0;transform:scaleX(0.926);transform-origin:0 0;">12.00mV</div><div style="position:absolute;left:960px;top:497px;width:11px;height:4px;border-radius:2px;background:#3a3a3a"></div><div style="position:absolute;left:999px;top:490px;width:20px;height:20px;background:#262626"><svg width="20" height="20" viewBox="0 0 20 20" stroke="#555" stroke-width="1.3"><path d="M4 4L16 16M16 4L4 16"/></svg></div>
<div style="position:absolute;left:0;top:536px;width:1024px;height:64px;background:#141414"></div><div style="position:absolute;left:4px;top:540px;width:100px;height:56px;background:#3b3b3b;border-radius:2px"></div><div style="position:absolute;left:41px;top:540px;width:63px;height:18px;background:#1c1c1c;border-bottom-left-radius:3px;border-top-right-radius:2px"></div><div style="position:absolute;left:6px;top:542px;width:33px;height:16px;background:#f5f500;border-radius:3px"></div><div class="t" style="left:15.70px;top:544.49px;font-size:12px;letter-spacing:0.00px;color:#3a3000;transform:scaleX(0.827);transform-origin:0 0;">C1</div><div style="position:absolute;left:73px;top:543px;width:29px;height:13px;background:#0f0f0f"></div><div class="t" style="right:923.20px;top:544.49px;font-size:12px;letter-spacing:0.00px;color:#e8e800;transform:scaleX(0.847);transform-origin:100% 0;">DC50</div><div class="t" style="left:7.60px;top:563.39px;font-size:12px;letter-spacing:0.00px;color:#e8e800;transform:scaleX(0.912);transform-origin:0 0;">1X</div><div class="t" style="left:7.60px;top:580.09px;font-size:12px;letter-spacing:0.00px;color:#e8e800;transform:scaleX(0.886);transform-origin:0 0;">FULL</div><div class="t" style="right:923.07px;top:563.39px;font-size:12px;letter-spacing:0.13px;color:#f0f0f0;">20.0mV/</div><div class="t" style="right:923.18px;top:580.09px;font-size:12px;letter-spacing:0.02px;color:#f0f0f0;">-30.7mV</div><svg style="position:absolute;left:107px;top:539px" width="102" height="58"><rect x="1" y="1" width="100" height="56" fill="#111"/><path d="M1 1.5H101M1.5 1V56M1 55.5H101M100.5 1V56" stroke="#8a8a8a" stroke-dasharray="1 2" fill="none"/><path d="M25 29.5H77M51.5 14V44" stroke="#666" fill="none"/></svg><div style="position:absolute;left:691px;top:540px;width:1px;height:56px;background:#303030"></div><div style="position:absolute;left:696px;top:540px;width:130px;height:56px;background:#3b3b3b;border-radius:2px"></div><div style="position:absolute;left:696px;top:540px;width:130px;height:18px;background:#1c1c1c;border-radius:2px 2px 0 0"></div><div class="t" style="left:699.50px;top:542.65px;font-size:13.5px;letter-spacing:0.00px;color:#f0f0f0;">时基</div><div class="t" style="left:699.50px;top:563.48px;font-size:12.5px;letter-spacing:0.00px;color:#f0f0f0;transform:scaleX(0.999);transform-origin:0 0;">20.0ns</div><div class="t" style="left:699.50px;top:581.38px;font-size:12.5px;letter-spacing:0.28px;color:#f0f0f0;">20.0kpts</div><div class="t" style="right:200.64px;top:563.48px;font-size:12.5px;letter-spacing:0.36px;color:#f0f0f0;">1.00us/div</div><div class="t" style="right:201.00px;top:581.38px;font-size:12.5px;letter-spacing:0.00px;color:#f0f0f0;transform:scaleX(0.972);transform-origin:100% 0;">2.00GSa/s</div><div style="position:absolute;left:830px;top:540px;width:110px;height:56px;background:#3b3b3b;border-radius:2px"></div><div style="position:absolute;left:830px;top:540px;width:110px;height:18px;background:#1c1c1c;border-radius:2px 2px 0 0"></div><div class="t" style="left:833.80px;top:542.65px;font-size:13.5px;letter-spacing:0.00px;color:#e8e800;">触发</div><div style="position:absolute;left:906px;top:543px;width:13px;height:12px;background:#0f0f0f;border-radius:1px"></div><div style="position:absolute;left:922px;top:543px;width:16px;height:12px;background:#0f0f0f;border-radius:1px"></div><div class="t" style="left:907.00px;top:544.20px;font-size:11.5px;letter-spacing:0.00px;color:#e8e800;transform:scaleX(0.748);transform-origin:0 0;">C1</div><div class="t" style="left:923.00px;top:544.20px;font-size:11.5px;letter-spacing:0.00px;color:#e8e800;transform:scaleX(0.843);transform-origin:0 0;">DC</div><div class="t" style="left:834.00px;top:563.05px;font-size:13.5px;letter-spacing:0.00px;color:#f0f0f0;">自动</div><div class="t" style="left:834.00px;top:580.05px;font-size:13.5px;letter-spacing:0.00px;color:#f0f0f0;">边沿</div><div class="t" style="right:86.94px;top:564.18px;font-size:12.5px;letter-spacing:0.06px;color:#f0f0f0;">2.33mV</div><div class="t" style="right:85px;top:580.05px;font-size:13.5px;color:#f0f0f0">上升沿</div><div style="position:absolute;left:944px;top:540px;width:80px;height:56px;background:#1e1e1e"></div><svg style="position:absolute;left:977px;top:541px" width="14" height="18" viewBox="0 0 14 18" fill="none" stroke="#8e8e8e" stroke-width="1.2"><path d="M6.6 3.5V14.5M2.9 8V9.6L6.6 12.6M10.9 5.8V7.6L6.6 10.6"/><path d="M4.9 4.4L6.6 1.1 8.3 4.4Z" fill="#8e8e8e" stroke="none"/><circle cx="2.9" cy="8" r="1.4" fill="#8e8e8e" stroke="none"/><circle cx="10.9" cy="5.8" r="1.4" fill="#8e8e8e" stroke="none"/><circle cx="6.6" cy="14.6" r="1.7" fill="#8e8e8e" stroke="none"/></svg><svg style="position:absolute;left:995px;top:541px" width="19" height="18" viewBox="0 0 19 18" fill="none" stroke="#a8a8a8" stroke-width="1.1"><rect x="5.7" y="1.6" width="6.1" height="5.2"/><path d="M8.75 6.8V8.5M1 8.5H14.7M4.7 8.5V10.1M13.7 8.5V10.1"/><rect x="2.5" y="10.1" width="4.4" height="5.3"/><rect x="11.5" y="10.1" width="4.4" height="5.3"/><path d="M8.6 8.6L16.6 16.4M16.6 8.6L8.6 16.4" stroke="#ff0000" stroke-width="2.4"/></svg><div class="t" style="left:960.60px;top:562.98px;font-size:12.5px;letter-spacing:0.00px;color:#f0f0f0;transform:scaleX(0.966);transform-origin:0 0;">15:24:47</div><div class="t" style="left:954.50px;top:580.98px;font-size:12.5px;letter-spacing:0.36px;color:#f0f0f0;">2022/7/12</div>
</body></html>
